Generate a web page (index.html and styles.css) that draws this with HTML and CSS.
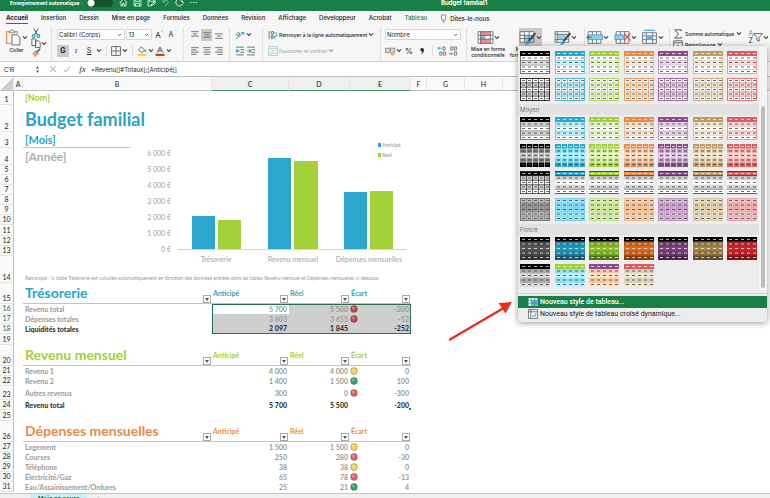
FILE: index.html
```
<!DOCTYPE html>
<html lang="fr">
  <head>
    <meta charset="utf-8">
    <title>Budget familial1</title>
    <link rel="stylesheet" href="styles.css">
  </head>
  <body>
    <svg class="sprite" aria-hidden="true">
      <symbol id="caret" viewBox="0 0 5 4"><path d="M.8 1l1.7 1.7L4.2 1" fill="none" stroke="#444" stroke-width="1"/></symbol>
      <symbol id="light" viewBox="0 0 8 8"><circle cx="4" cy="4" r="3.4" fill="currentColor" stroke="rgba(0,0,0,.35)" stroke-width=".7"/><circle cx="3.2" cy="3" r="1.2" fill="#fff" opacity=".35"/></symbol>

      <!-- table style previews -->
      <symbol id="dashes" viewBox="0 0 30 23">
        <path d="M2 2.5h28" stroke="#fff" stroke-dasharray="3 3" opacity=".7"/>
        <path d="M2 7h28M2 11.5h28M2 16h28M2 20.5h28" stroke="#444" stroke-dasharray="3 3" opacity=".8"/>
      </symbol>
      <symbol id="lines" viewBox="0 0 30 23">
        <rect width="30" height="23" fill="#fff"/>
        <path d="M0 11.5h30" stroke="var(--tint)" stroke-width="4" opacity=".5"/>
        <path d="M0 9.5h30M0 14h30M0 18.5h30" stroke="var(--mid)" stroke-width=".7"/>
        <rect x=".5" y=".5" width="29" height="22" fill="none" stroke="var(--mid)"/>
        <rect width="30" height="5" fill="var(--main)"/>
        <use href="#dashes"/>
      </symbol>
      <symbol id="grid" viewBox="0 0 30 23">
        <rect width="30" height="23" fill="#fff"/>
        <path d="M0 7h30M0 16h30" stroke="var(--tint)" stroke-width="4" opacity=".6"/>
        <path d="M0 4.8h30M0 9.2h30M0 13.8h30M0 18.2h30M6.5 0v23M12.5 0v23M18.5 0v23M24.5 0v23" stroke="var(--main)" stroke-width=".6"/>
        <rect x=".5" y=".5" width="29" height="22" fill="none" stroke="var(--main)" stroke-width=".8"/>
        <use href="#dashes"/>
        <path d="M2 2.5h28" stroke="#444" stroke-dasharray="3 3" opacity=".8"/>
      </symbol>
      <symbol id="bands" viewBox="0 0 30 23">
        <rect width="30" height="23" fill="#fff"/>
        <path d="M0 7h30M0 16h30" stroke="var(--tint)" stroke-width="4.5" opacity=".7"/>
        <path d="M0 9.3h30M0 13.8h30M0 18.3h30" stroke="var(--mid)" stroke-width=".6"/>
        <rect x=".5" y=".5" width="29" height="22" fill="none" stroke="var(--mid)"/>
        <rect width="30" height="5" fill="var(--main)"/>
        <use href="#dashes"/>
      </symbol>
      <symbol id="blocks" viewBox="0 0 30 23">
        <rect width="30" height="23" fill="var(--tint)"/>
        <path d="M0 7h30M0 16h30" stroke="var(--mid)" stroke-width="4.5"/>
        <rect width="30" height="5" fill="var(--main)"/>
        <rect y="18" width="30" height="5" fill="var(--main)"/>
        <path d="M6.5 0v23M12.5 0v23M18.5 0v23M24.5 0v23M0 4.8h30M0 9.2h30M0 13.8h30M0 18.2h30" stroke="#fff" stroke-width=".6"/>
        <use href="#dashes"/>
      </symbol>
      <symbol id="grey" viewBox="0 0 30 23">
        <rect width="30" height="23" fill="#fff"/>
        <path d="M0 7h30M0 16h30" stroke="#d4d4d4" stroke-width="4.5"/>
        <rect width="30" height="5" fill="var(--main)"/>
        <path d="M0 .5h30M0 4.7h30M0 22.5h30" stroke="#333" stroke-width=".8"/>
        <path d="M0 18.3h30" stroke="#777" stroke-width=".8"/>
        <use href="#dashes"/>
      </symbol>
      <symbol id="greygrid" viewBox="0 0 30 23">
        <use href="#grey"/>
        <path d="M.5 0v23M6.5 5v18M12.5 5v18M18.5 5v18M24.5 5v18M29.5 0v23M0 9.3h30M0 13.8h30" stroke="#222" stroke-width=".7"/>
      </symbol>
      <symbol id="tinted" viewBox="0 0 30 23">
        <rect width="30" height="23" fill="var(--tint)"/>
        <path d="M0 7h30M0 11.5h30" stroke="var(--mid)" stroke-width="4" opacity=".5"/>
        <path d="M0 4.8h30M0 9.2h30M0 13.8h30M0 18.2h30M6.5 0v23M12.5 0v23M18.5 0v23M24.5 0v23" stroke="var(--mid)" stroke-width=".6"/>
        <rect x=".5" y=".5" width="29" height="22" fill="none" stroke="var(--mid)"/>
        <use href="#dashes"/>
        <path d="M2 2.5h28" stroke="#444" stroke-dasharray="3 3" opacity=".8"/>
      </symbol>
      <symbol id="solid" viewBox="0 0 30 23">
        <rect width="30" height="23" fill="var(--deep)"/>
        <path d="M0 7h30M0 16h30" stroke="#000" stroke-width="4.5" opacity=".12"/>
        <path d="M0 20.7h30" stroke="#000" stroke-width="4.6" opacity=".4"/>
        <rect width="30" height="4.5" fill="#000"/>
        <path d="M2 2.5h28M2 7h28M2 11.5h28M2 16h28M2 20.5h28" stroke="#fff" stroke-dasharray="3 3" opacity=".7"/>
      </symbol>
      <symbol id="duo" viewBox="0 0 30 23">
        <rect width="30" height="23" fill="var(--light)"/>
        <path d="M0 7h30M0 16h30" stroke="var(--stripe)" stroke-width="4.5"/>
        <path d="M0 18.5h30" stroke="var(--stripe)"/>
        <rect width="30" height="5" fill="var(--main)"/>
        <use href="#dashes"/>
      </symbol>
    </svg>

    <div class="app">
      <header class="titlebar">
        <label class="autosave">Enregistrement automatique <input type="checkbox" class="toggle"></label>
        <nav class="quick">
          <button aria-label="Accueil"><svg viewBox="0 0 9 9"><path d="M1 4.5L4.5 1 8 4.5M2 4v4h1.800V5.500h1.400V8H7V4"/></svg></button>
          <button aria-label="Enregistrer"><svg viewBox="0 0 9 9"><path d="M1 1h6l1 1v6H1zM2.500 1v2.300h4V1M2.500 8V5.300h4V8"/></svg></button>
          <button aria-label="Enregistrer sous"><svg viewBox="0 0 9 9"><path d="M1 1h6l1 1v2M3.500 8H1V1M2.500 1v2.300h4V1M4 8l.5-2L8 3.500 8.500 5z"/></svg></button>
          <button class="dim" aria-label="Annuler"><svg viewBox="0 0 9 9"><path d="M2 1v3h3M2 4c2-3 6-2 5 1L4 8"/></svg></button>
          <button aria-label="Rétablir"><svg viewBox="0 0 9 9"><path d="M6 1.200A3.600 3.600 0 1 0 8 4M6 1v2.300h2.300"/></svg></button>
          <button aria-label="Plus"><svg viewBox="0 0 9 9"><path d="M1 4.500h1.400M3.800 4.500h1.400M6.600 4.500H8"/></svg></button>
        </nav>
        <span class="docname">Budget familial1</span>
      </header>

      <nav class="tabs">
        <a href="#" class="active">Accueil</a>
        <a href="#">Insertion</a>
        <a href="#">Dessin</a>
        <a href="#">Mise en page</a>
        <a href="#">Formules</a>
        <a href="#">Données</a>
        <a href="#">Révision</a>
        <a href="#">Affichage</a>
        <a href="#">Développeur</a>
        <a href="#">Acrobat</a>
        <a href="#" class="context">Tableau</a>
        <a href="#" class="tell"><svg viewBox="0 0 7 9"><path d="M2.300 6.300C2.300 5 1 4.600 1 3.100a2.500 2.500 0 0 1 5 0c0 1.500-1.300 1.900-1.300 3.200zM2.500 8h2" fill="none" stroke="#555" stroke-width=".7"/></svg>Dites-le-nous</a>
      </nav>

      <div class="ribbon">
        <div class="group clipboard">
          <button class="big">
            <span class="icon-row"><svg class="i16" viewBox="0 0 16 16"><path d="M5 2.500H1.500v11H6M9 2.500h2.500V5" fill="none" stroke="#e8a04c" stroke-width="1.300"/><path d="M4 3.500V2h1.500a1.200 1.200 0 0 1 2.400 0H9.500v1.500z" fill="#fff" stroke="#777" stroke-width=".8"/><path d="M6.500 5.500h5l2.500 2.500v7H6.500z" fill="#fff" stroke="#666" stroke-width=".9"/></svg><svg class="caret"><use href="#caret"/></svg></span>
            Coller
          </button>
          <div class="stack">
            <button aria-label="Couper"><svg class="i9" viewBox="0 0 9 9"><path d="M2.500.5l3.500 6M6.500.5L3 6.500" fill="none" stroke="#555" stroke-width=".9"/><circle cx="2.300" cy="7.200" r="1.200" fill="none" stroke="#2a9fd0"/><circle cx="6.700" cy="7.200" r="1.200" fill="none" stroke="#2a9fd0"/></svg></button>
            <button aria-label="Copier"><svg class="i9" viewBox="0 0 9 9"><path d="M.8.8h3.500v6H.8zM4 2.500h2.500L8.300 4v4.500H4z" fill="#fff" stroke="#555" stroke-width=".8"/></svg><svg class="caret"><use href="#caret"/></svg></button>
            <button aria-label="Reproduire la mise en forme"><svg class="i9" viewBox="0 0 9 9"><path d="M8.300.7L5.500 3.500" stroke="#555" stroke-width="1.400"/><path d="M3.500 2.500l3 3L4 8.500 1 5.500z" fill="#f0a45c"/><path d="M3.600 2.300l3.200 3.200" stroke="#555" stroke-width=".9"/></svg></button>
          </div>
        </div>

        <div class="group font">
          <div class="line">
            <select class="box font-name" aria-label="Police"><option>Calibri (Corps)</option></select>
            <select class="box font-size" aria-label="Taille"><option>13</option></select>
            <button class="letter">A<sup>^</sup></button>
            <button class="letter small">A<sup>ˇ</sup></button>
          </div>
          <div class="line">
            <button class="on"><b>G</b></button>
            <button class="sq"><i class="serif">I</i></button>
            <button class="sq"><u>S</u></button><svg class="caret"><use href="#caret"/></svg>
            <span class="sep"></span>
            <svg class="i9" viewBox="0 0 9 9"><path d="M.5.5h8v8h-8zM4.500.5v8M.5 4.500h8" fill="none" stroke="#666" stroke-width=".8"/></svg><svg class="caret"><use href="#caret"/></svg>
            <span class="sep"></span>
            <svg class="i9" viewBox="0 0 9 9"><path d="M3.800.8L7 3.800 4 6 1.500 3.500z" fill="#fff" stroke="#555" stroke-width=".8"/><path d="M7 3.500l1 1.800" stroke="#2a9fd0"/><path d="M.5 8h8" stroke="#f5d32c" stroke-width="1.800"/></svg><svg class="caret"><use href="#caret"/></svg>
            <svg class="i9" viewBox="0 0 9 9"><path d="M2 6l2.500-5L7 6M3 4.300h3" fill="none" stroke="#555" stroke-width=".9"/><path d="M.5 8h8" stroke="#e2231a" stroke-width="1.800"/></svg><svg class="caret"><use href="#caret"/></svg>
          </div>
        </div>

        <div class="group align">
          <div class="line">
            <button class="sq" aria-label="Haut"><svg class="i9" viewBox="0 0 9 9"><path d="M1 1.500h7M2.500 3.500h4M1 5.500h7"/></svg></button>
            <button class="on" aria-label="Milieu"><svg class="i9" viewBox="0 0 9 9"><path d="M1 2.500h7M2.500 4.500h4M1 6.500h7"/></svg></button>
            <button class="sq" aria-label="Bas"><svg class="i9" viewBox="0 0 9 9"><path d="M1 3.500h7M2.500 5.500h4M1 7.500h7"/></svg></button>
          </div>
          <div class="line">
            <button class="sq" aria-label="Gauche"><svg class="i9" viewBox="0 0 9 9"><path d="M1 1.500h7M1 3.500h5M1 5.500h7M1 7.500h5"/></svg></button>
            <button class="sq" aria-label="Centrer"><svg class="i9" viewBox="0 0 9 9"><path d="M1 1.500h7M2 3.500h5M1 5.500h7M2 7.500h5"/></svg></button>
            <button class="sq" aria-label="Droite"><svg class="i9" viewBox="0 0 9 9"><path d="M1 1.500h7M3 3.500h5M1 5.500h7M3 7.500h5"/></svg></button>
          </div>
        </div>

        <div class="group indent">
          <div class="line">
            <svg class="i9" viewBox="0 0 9 9"><path d="M1 8l7-6M8 2L5.500 2.300M8 2v2.500" fill="none" stroke="#2a9fd0" stroke-width=".9"/><path d="M1 4l2-2 1.500 1.500-2 2z" fill="none" stroke="#555" stroke-width=".8"/></svg><svg class="caret"><use href="#caret"/></svg>
          </div>
          <div class="line">
            <svg class="i9" viewBox="0 0 9 9"><path d="M1 1h7M1 8h7M5 3.300h3M5 5.700h3" stroke="#666" stroke-width=".8"/><path d="M4.500 4.500h-3M2.500 3L1 4.500 2.500 6" fill="none" stroke="#2a9fd0"/></svg>
            <svg class="i9" viewBox="0 0 9 9"><path d="M1 1h7M1 8h7M5 3.300h3M5 5.700h3" stroke="#666" stroke-width=".8"/><path d="M1 4.500h3M2.800 3l1.500 1.500L2.800 6" fill="none" stroke="#2a9fd0"/></svg>
          </div>
        </div>

        <div class="group wrap">
          <button class="line"><svg class="i9" viewBox="0 0 9 9"><path d="M1 1v7M3 1.500h2v2H3zM3 5h1.500v2.500H3z" fill="none" stroke="#666" stroke-width=".8"/><path d="M6 2.500h1.500c1.500 3-.5 4-2 4M6.800 5L5.300 6.500 6.800 8" fill="none" stroke="#2a9fd0" stroke-width=".8"/></svg>Renvoyer à la ligne automatiquement <svg class="caret"><use href="#caret"/></svg></button>
          <button class="line" disabled><svg class="i9" viewBox="0 0 9 9"><path d="M.5.5h8v8h-8zM.5 2.500h8M.5 6.500h8M3 4.500h3" fill="none" stroke="#9cc" stroke-width=".7"/></svg>Fusionner et centrer <svg class="caret"><use href="#caret"/></svg></button>
        </div>

        <div class="group number">
          <div class="line"><select class="box" aria-label="Format"><option>Nombre</option></select></div>
          <div class="line">
            <svg class="i9" viewBox="0 0 9 9"><path d="M.5 2h8v4h-8z" fill="#ddd" stroke="#777" stroke-width=".7"/><circle cx="4.500" cy="4" r="1" fill="#888"/><path d="M5 5h3.500v3.500H5z" fill="#f1b15f"/></svg><svg class="caret"><use href="#caret"/></svg>
            <button class="sq pct">%</button>
            <button class="sq" aria-label="Milliers"><svg class="i9" viewBox="0 0 9 9"><path d="M3 3.200a1.600 1.600 0 1 1 3.200.3C6.200 5.500 5 7 3.500 7.500c.8-1 1.200-1.700 1.200-2.600A1.600 1.600 0 0 1 3 3.200z" fill="#222"/></svg></button>
            <span class="sep"></span>
            <svg class="i9" viewBox="0 0 9 9"><path d="M4 2H.8M2 .8L.8 2 2 3.200" fill="none" stroke="#2a9fd0" stroke-width=".9"/><path d="M5.300.8h2v2.800h-2zM2.500 5.400h2v2.800h-2zM5.800 5.400h2v2.800h-2z" fill="none" stroke="#666" stroke-width=".7"/></svg>
            <svg class="i9" viewBox="0 0 9 9"><path d="M.8 7H4M2.800 5.800L4 7 2.800 8.200" fill="none" stroke="#2a9fd0" stroke-width=".9"/><path d="M2.500.8h2v2.800h-2zM5.800.8h2v2.800h-2zM5.800 5.400h2v2.800h-2z" fill="none" stroke="#666" stroke-width=".7"/></svg>
          </div>
        </div>

        <div class="group styles">
          <button class="big">
            <span class="icon-row"><svg class="i16" viewBox="0 0 16 16"><path d="M1 2.500h14v11H1z" fill="#fff"/><path d="M3 2.500h9v3.500H3zM3 9.500h9v4H3z" fill="#f28b82"/><path d="M3 6h5v3.500H3z" fill="#7db8dc"/><path d="M1 2.500h14v11H1zM3.500 2v12M12.500 2v12M1 6h14M1 9.500h14" fill="none" stroke="#555" stroke-width=".7"/></svg><svg class="caret"><use href="#caret"/></svg></span>
            Mise en forme<br>conditionnelle
          </button>
          <button class="big">
            <span class="icon-row pressed"><svg class="i16" viewBox="0 0 16 16"><path d="M1 2.500h13v10H1z" fill="#fff"/><path d="M5 6h9v6.500H5z" fill="#8fd0ee"/><path d="M1 2.500h13v10H1zM5 2.500v10M9.500 2.500v10M1 6h13M1 9h13" fill="none" stroke="#555" stroke-width=".7"/><path d="M15.500 4L9 11.500" stroke="#444" stroke-width="1.800"/><path d="M8.500 10.500l2 2c-1.500 2.500-3.500 2.500-5 2 2-1 1.500-3 3-4z" fill="#2a9fd0"/></svg><svg class="caret"><use href="#caret"/></svg></span>
            Mettre sous<br>forme de tableau
          </button>
          <button class="big">
            <span class="icon-row"><svg class="i16" viewBox="0 0 16 16"><path d="M1 2.500h13v10H1z" fill="#fff"/><path d="M3 5h9v5H3z" fill="#8fd0ee"/><path d="M1 2.500h13v10H1zM3 2.500v10M1 5h13M1 10h13" fill="none" stroke="#555" stroke-width=".7"/><path d="M15.500 4L9 11.500" stroke="#444" stroke-width="1.800"/><path d="M8.500 10.500l2 2c-1.500 2.500-3.500 2.500-5 2 2-1 1.500-3 3-4z" fill="#2a9fd0"/></svg><svg class="caret"><use href="#caret"/></svg></span>
            Styles<br>de cellules
          </button>
        </div>

        <div class="group cells">
          <button class="big"><span class="icon-row"><svg class="i16" viewBox="0 0 16 16"><path d="M2 2.500h12v11H2zM6 2.500v11M10 2.500v11" fill="#fff" stroke="#666" stroke-width=".8"/><path d="M3.500 5.500h12v4.500h-12z" fill="#8fd0ee" stroke="#3b93bd" stroke-width=".7"/><path d="M6 7.800H.8M3 5.500L.8 7.800 3 10" fill="none" stroke="#2a7fa8"/></svg><svg class="caret"><use href="#caret"/></svg></span>Insérer</button>
          <button class="big"><span class="icon-row"><svg class="i16" viewBox="0 0 16 16"><path d="M2 2.500h12v11H2zM6 2.500v11M10 2.500v11" fill="#fff" stroke="#666" stroke-width=".8"/><path d="M.8 5.500h8v4.500h-8z" fill="#8fd0ee" stroke="#3b93bd" stroke-width=".7"/><path d="M9.500 4l6 7M15.500 4l-6 7" stroke="#e05252" stroke-width="1.200"/></svg><svg class="caret"><use href="#caret"/></svg></span>Supprimer</button>
          <button class="big"><span class="icon-row"><svg class="i16" viewBox="0 0 16 16"><path d="M1.500 3.500h13v10h-13zM5 3.500v10M11 3.500v10M1.500 6.500h13M1.500 10h13" fill="#fff" stroke="#666" stroke-width=".8"/><path d="M5 6.500h6V10H5z" fill="#5bb5e0"/><path d="M3 1.200h10" stroke="#2a9fd0"/></svg><svg class="caret"><use href="#caret"/></svg></span>Format</button>
        </div>

        <div class="group edit">
          <div class="edit-lines">
            <button><svg class="i9" viewBox="0 0 9 9"><path d="M7.500 2V.8h-6L5 4.500 1.500 8.200h6V7" fill="none" stroke="#555" stroke-width=".9"/></svg>Somme automatique<svg class="caret"><use href="#caret"/></svg></button>
            <button><svg class="i9" viewBox="0 0 9 9"><path d="M.7.7h7.600v7.600H.7zM.7 2.500h7.600" fill="#fff" stroke="#555" stroke-width=".8"/><path d="M4.500 3.500V7M3 5.500L4.500 7 6 5.500" fill="none" stroke="#2a9fd0"/></svg>Remplissage<svg class="caret"><use href="#caret"/></svg></button>
          </div>
          <button class="icon-row" aria-label="Trier et filtrer"><span class="az"><span>A</span><span>Z</span></span><svg class="i9" viewBox="0 0 9 9"><path d="M.5 1.500h8L5.500 4.800v3.500l-2-1V4.800z" fill="#fff" stroke="#555" stroke-width=".8"/></svg><svg class="caret"><use href="#caret"/></svg></button>
        </div>
      </div>

      <div class="formula-bar">
        <input class="cell-ref" value="C16" aria-label="Zone Nom">
        <svg class="spin" viewBox="0 0 5 9"><path d="M1 3.500L2.500 1 4 3.500zM1 5.500L2.500 8 4 5.500z" fill="#555"/></svg>
        <button aria-label="Annuler la saisie"><svg class="i9" viewBox="0 0 9 9"><path d="M2 2l5 5M7 2L2 7" stroke="#bbb"/></svg></button>
        <button aria-label="Valider"><svg class="i9" viewBox="0 0 9 9"><path d="M1.500 5L3.500 7 7.500 2" fill="none" stroke="#bbb"/></svg></button>
        <i class="serif fx">fx</i>
        <input class="formula" value="=Revenu[[#Totaux];[Anticipé]]" aria-label="Barre de formule">
      </div>

      <main class="sheet">
        <table>
          <colgroup><col class="c-row"><col class="c-a"><col class="c-b"><col class="c-c"><col class="c-d"><col class="c-d"><col class="c-f"><col class="c-g"><col class="c-g"><col></colgroup>
          <thead>
            <tr><th class="corner"></th><th>A</th><th>B</th><th class="sel">C</th><th class="sel">D</th><th class="sel">E</th><th>F</th><th>G</th><th>H</th><th></th></tr>
          </thead>
          <tbody>
            <tr class="r14"><th>1</th><td></td><td class="name">[Nom]</td></tr>
            <tr class="r27"><th>2</th><td></td><td class="title" colspan="2">Budget familial</td></tr>
            <tr class="r16"><th>3</th><td></td><td class="month"><span>[Mois]</span></td></tr>
            <tr class="r17"><th>4</th><td></td><td class="year">[Année]</td></tr>
            <tr><th>5</th></tr>
            <tr><th>6</th></tr>
            <tr><th>7</th></tr>
            <tr><th>8</th></tr>
            <tr><th>9</th></tr>
            <tr><th>10</th></tr>
            <tr class="r11"><th>11</th></tr>
            <tr><th>12</th></tr>
            <tr><th>13</th></tr>
            <tr class="r27"><th>14</th><td></td><td class="note" colspan="5">Remarque : la table Trésorerie est calculée automatiquement en fonction des données entrées dans les tables Revenu mensuel et Dépenses mensuelles ci-dessous</td></tr>

            <tr class="head blue"><th>15</th><td></td><td><div class="h big-h">Trésorerie<button class="filter" aria-label="Filtrer"></button></div></td><td><div class="h">Anticipé<button class="filter" aria-label="Filtrer"></button></div></td><td><div class="h">Réel<button class="filter" aria-label="Filtrer"></button></div></td><td><div class="h">Écart<button class="filter" aria-label="Filtrer"></button></div></td></tr>
            <tr class="picked first"><th>16</th><td></td><td>Revenu total</td><td class="n s active-cell">5 700</td><td class="n s">5 500</td><td class="n s"><svg class="dot red"><use href="#light"/></svg>-200</td></tr>
            <tr class="picked"><th>17</th><td></td><td>Dépenses totales</td><td class="n s">3 603</td><td class="n s">3 655</td><td class="n s"><svg class="dot red"><use href="#light"/></svg>-52</td></tr>
            <tr class="picked last total"><th>18</th><td></td><td>Liquidités totales</td><td class="n s">2 097</td><td class="n s">1 845</td><td class="n s">-252</td></tr>
            <tr class="r11"><th>19</th></tr>

            <tr class="head green"><th>20</th><td></td><td><div class="h big-h">Revenu mensuel<button class="filter" aria-label="Filtrer"></button></div></td><td><div class="h">Anticipé<button class="filter" aria-label="Filtrer"></button></div></td><td><div class="h">Réel<button class="filter" aria-label="Filtrer"></button></div></td><td><div class="h">Écart<button class="filter" aria-label="Filtrer"></button></div></td></tr>
            <tr><th>21</th><td></td><td>Revenu 1</td><td class="n">4 000</td><td class="n">4 000</td><td class="n"><svg class="dot yellow"><use href="#light"/></svg>0</td></tr>
            <tr><th>22</th><td></td><td>Revenu 2</td><td class="n">1 400</td><td class="n">1 500</td><td class="n"><svg class="dot ok"><use href="#light"/></svg>100</td></tr>
            <tr class="r14"><th>23</th><td></td><td>Autres revenus</td><td class="n">300</td><td class="n">0</td><td class="n"><svg class="dot red"><use href="#light"/></svg>-300</td></tr>
            <tr class="total"><th>24</th><td></td><td>Revenu total</td><td class="n">5 700</td><td class="n">5 500</td><td class="n end">-200</td></tr>
            <tr class="r11"><th>25</th></tr>

            <tr class="head orange"><th>26</th><td></td><td><div class="h big-h">Dépenses mensuelles<button class="filter" aria-label="Filtrer"></button></div></td><td><div class="h">Anticipé<button class="filter" aria-label="Filtrer"></button></div></td><td><div class="h">Réel<button class="filter" aria-label="Filtrer"></button></div></td><td><div class="h">Écart<button class="filter" aria-label="Filtrer"></button></div></td></tr>
            <tr><th>27</th><td></td><td>Logement</td><td class="n">1 500</td><td class="n">1 500</td><td class="n"><svg class="dot yellow"><use href="#light"/></svg>0</td></tr>
            <tr><th>28</th><td></td><td>Courses</td><td class="n">250</td><td class="n">280</td><td class="n"><svg class="dot red"><use href="#light"/></svg>-30</td></tr>
            <tr><th>29</th><td></td><td>Téléphone</td><td class="n">38</td><td class="n">38</td><td class="n"><svg class="dot yellow"><use href="#light"/></svg>0</td></tr>
            <tr><th>30</th><td></td><td>Électricité/Gaz</td><td class="n">65</td><td class="n">78</td><td class="n"><svg class="dot red"><use href="#light"/></svg>-13</td></tr>
            <tr><th>31</th><td></td><td>Eau/Assainissement/Ordures</td><td class="n">25</td><td class="n">21</td><td class="n"><svg class="dot ok"><use href="#light"/></svg>4</td></tr>
          </tbody>
        </table>

        <svg class="chart" viewBox="0 0 280 130">
          <g text-anchor="end">
            <text x="31" y="18">6 000 €</text>
            <text x="31" y="34">5 000 €</text>
            <text x="31" y="50">4 000 €</text>
            <text x="31" y="66">3 000 €</text>
            <text x="31" y="82">2 000 €</text>
            <text x="31" y="98">1 000 €</text>
            <text x="31" y="114">0 €</text>
          </g>
          <path d="M38 111.500h228" stroke="#d5d5d5"/>
          <g fill="#2ba7cf">
            <rect x="52" y="78" width="23" height="33"/>
            <rect x="128" y="20" width="23" height="91"/>
            <rect x="204" y="54" width="23" height="57"/>
            <rect x="238" y="5" width="3" height="4"/>
          </g>
          <g fill="#a2d13a">
            <rect x="78" y="82" width="23" height="29"/>
            <rect x="154" y="23" width="24" height="88"/>
            <rect x="230" y="53" width="23" height="58"/>
            <rect x="238" y="15" width="3" height="4"/>
          </g>
          <g text-anchor="middle">
            <text x="76" y="124">Trésorerie</text>
            <text x="153" y="124">Revenu mensuel</text>
            <text x="229" y="124">Dépenses mensuelles</text>
          </g>
          <text class="legend" x="242" y="9">Anticipé</text>
          <text class="legend" x="242" y="19">Réel</text>
        </svg>

        <svg class="arrow" viewBox="0 0 66 42"><path d="M2 38.500L54 8" stroke="#e8301c" stroke-width="2.500" stroke-linecap="round"/><path d="M64 1L57.500 12.500 50.500 2z" fill="#e8301c"/></svg>
      </main>

      <footer class="sheet-tabs">
        <a href="#">Mois en cours</a>
        <button aria-label="Ajouter une feuille">+</button>
      </footer>

      <div class="style-menu">
        <div class="scroller">
          <div class="gallery">
            <div class="thumbs" data-rows="lines grid"></div>
            <h2>Moyen</h2>
            <div class="thumbs" data-rows="bands blocks grey tinted"></div>
            <h2>Foncé</h2>
            <div class="thumbs" data-rows="solid duo"></div>
          </div>
          <div class="track"><div class="knob"></div></div>
        </div>
        <div class="actions">
          <button class="current"><svg class="i9" viewBox="0 0 9 9"><path d="M.5 1h8v7h-8z" fill="#fff"/><path d="M3 3h5.500v5H3z" fill="#5bb5e0"/><path d="M3 1v7M6 1v7M.5 3h8M.5 5.500h8" stroke="#3b78a8" stroke-width=".6"/></svg>Nouveau style de tableau...</button>
          <button><svg class="i9" viewBox="0 0 9 9"><path d="M.5.5h8v8h-8zM.5 2.500h8M2.500.5v8" fill="#fff" stroke="#555" stroke-width=".7"/><path d="M4 6.500h2.500V4M3.800 6.500l1-1M6.500 4l1 1" fill="none" stroke="#2a9fd0" stroke-width=".8"/></svg>Nouveau style de tableau croisé dynamique...</button>
        </div>
      </div>
    </div>
    <script src="script.js"></script>
  </body>
</html>
```
FILE: styles.css
```
* {
  box-sizing: border-box;
}
body {
  margin: 0;
  overflow: hidden;
  font-family: Inter, "Liberation Sans", sans-serif;
  font-size: 6px;
  color: #222;
  background: #fff;
}
button {
  font: inherit;
  color: inherit;
  background: none;
  border: 0;
  padding: 0;
  white-space: nowrap;
}
input,
select {
  font: inherit;
  color: inherit;
}
a {
  color: inherit;
  text-decoration: none;
}
.sprite {
  position: absolute;
  width: 0;
  height: 0;
}
.app {
  position: relative;
  display: flex;
  flex-direction: column;
  height: 100vh;
}
.serif {
  font-family: "Liberation Serif", serif;
}
.i9 {
  width: 10px;
  height: 10px;
  flex: none;
}
.i16 {
  width: 17px;
  height: 17px;
  flex: none;
}
.caret {
  width: 6px;
  height: 5px;
  flex: none;
}

/* title bar */
.titlebar {
  display: flex;
  align-items: center;
  flex: none;
  height: 11px;
  padding: 0 10px 6px;
  background: #1a7f46;
  color: #fff;
  font-weight: 600;
  overflow: hidden;
}
.autosave {
  display: flex;
  align-items: center;
  gap: 7px;
  width: 109px;
  font-size: 5px;
  font-weight: 700;
  white-space: nowrap;
}
.toggle {
  appearance: none;
  margin: 0;
  width: 26px;
  height: 8px;
  flex: none;
  border-radius: 4px;
  background: radial-gradient(circle at 4px 4px, #fff 3px, #14532f 4px);
}
.quick {
  display: flex;
  gap: 5px;
  flex: none;
  width: 322px;
}
.quick svg {
  display: block;
  width: 9px;
  height: 9px;
  fill: none;
  stroke: #fff;
  stroke-width: 0.8;
}
.dim {
  opacity: 0.5;
}
.docname {
  font-weight: 700;
  white-space: nowrap;
}

/* tabs */
.tabs {
  display: flex;
  flex: none;
  gap: 13px;
  height: 16px;
  padding: 2px 6px 0;
  background: #f6f6f6;
  font-weight: 500;
  line-height: 10px;
}
.tabs a {
  height: 11px;
  white-space: nowrap;
}
.tabs .active {
  font-weight: 700;
  border-bottom: 1px solid #1a7f46;
}
.tabs .context {
  color: #1a7f46;
}
.tell {
  display: flex;
  align-items: center;
  gap: 3px;
}
.tell svg {
  width: 7px;
  height: 9px;
}

/* ribbon */
.ribbon {
  display: flex;
  flex: none;
  height: 35px;
  background: #f6f6f6;
  border-bottom: 1px solid #d2d2d2;
}
.group {
  display: flex;
  flex: none;
  flex-direction: column;
  gap: 3px;
  padding: 1px 5px 3px;
}
.group + .group {
  border-left: 1px solid #e0e0e0;
}
.line {
  display: flex;
  align-items: center;
  height: 13px;
  gap: 1px;
}
.line:disabled {
  color: #aaa;
}
.line:disabled .caret {
  opacity: 0.5;
}
.sep {
  width: 1px;
  height: 11px;
  margin: 0 3px;
  background: #ddd;
}
.box {
  appearance: none;
  height: 11px;
  padding: 0 8px 0 1px;
  border: 1px solid #d6d6d6;
  border-radius: 1px;
  background: #fff url("data:image/svg+xml,%3Csvg xmlns='http://www.w3.org/2000/svg' width='5' height='4'%3E%3Cpath d='M1 1l1.500 1.500L4 1' fill='none' stroke='%23444' stroke-width='.8'/%3E%3C/svg%3E") no-repeat right 2px center;
}
.on,
.sq {
  display: flex;
  align-items: center;
  justify-content: center;
  width: 12px;
  height: 12px;
  font-size: 7px;
}
.on {
  background: #c9c9c9;
}
.clipboard {
  flex-direction: row;
  width: 51px;
}
.big {
  display: flex;
  flex-direction: column;
  align-items: center;
  text-align: center;
  font-size: 5px;
  font-weight: 500;
  line-height: 6px;
}
.icon-row {
  display: flex;
  align-items: center;
  height: 18px;
}
.clipboard .big {
  gap: 1px;
}
.stack {
  display: flex;
  flex-direction: column;
}
.stack button {
  display: flex;
  align-items: center;
  height: 10px;
}
.font {
  width: 132px;
}
.font-name {
  width: 69px;
}
.font-size {
  width: 26px;
}
.letter {
  width: 12px;
  font-size: 8px;
  line-height: 10px;
}
.letter.small {
  font-size: 7px;
}
.letter sup {
  font-size: 5px;
  line-height: 1px;
  color: #2a9fd0;
}
.align {
  width: 46px;
}
.align svg {
  fill: none;
  stroke: #777;
  stroke-width: 0.9;
}
.indent {
  width: 33px;
}
.wrap {
  width: 118px;
}
.wrap .line {
  font-size: 5px;
  font-weight: 500;
}
.number {
  width: 86px;
  padding-left: 4px;
}
.number .box {
  width: 76px;
}
.pct {
  font-size: 8px;
}
.styles {
  flex-direction: row;
  gap: 0;
  width: 118px;
  padding: 1px 0 3px;
}
.styles .big {
  width: 42px;
}
.styles .big:last-child {
  width: 28px;
}
.pressed {
  background: #c9c9c9;
}
.cells {
  flex-direction: row;
  width: 85px;
  padding-left: 1px;
}
.cells .big {
  width: 25px;
}
.edit {
  flex: 1;
  flex-direction: row;
  padding: 1px 1px 3px 3px;
}
.edit-lines button {
  display: flex;
  align-items: center;
  gap: 2px;
  height: 11px;
  font-size: 5px;
  font-weight: 500;
}
.edit .icon-row {
  margin-left: auto;
}
.az {
  display: flex;
  flex-direction: column;
  font-size: 7px;
  line-height: 7px;
}
.az span:first-child {
  color: #2a9fd0;
}

/* formula bar */
.formula-bar {
  display: flex;
  align-items: center;
  flex: none;
  height: 15px;
  border-bottom: 1px solid #bdbdbd;
}
.formula-bar input {
  border: 0;
  padding: 0;
  background: none;
  outline: 0;
}
.formula-bar button {
  width: 14px;
}
.cell-ref {
  width: 31px;
  margin-left: 4px;
}
.spin {
  width: 5px;
  height: 9px;
  margin-right: 6px;
}
.fx {
  width: 17px;
  font-size: 9px;
  text-align: center;
}
.formula {
  flex: 1;
}

/* sheet */
.sheet {
  position: relative;
  flex: 1;
  min-height: 0;
  overflow: hidden;
  font-family: Lato, "Liberation Sans", sans-serif;
  font-size: 7px;
}
.sheet table {
  width: 100%;
  table-layout: fixed;
  border-collapse: separate;
  border-spacing: 0;
}
.c-row {
  width: 14px;
}
.c-a {
  width: 9px;
}
.c-b {
  width: 189px;
}
.c-c {
  width: 77px;
}
.c-d {
  width: 61px;
}
.c-f {
  width: 16px;
}
.c-g {
  width: 38px;
}
.sheet thead th {
  height: 14px;
  padding: 0;
  font-weight: 400;
  border-right: 1px solid #e6e6e6;
  border-bottom: 1px solid #bdbdbd;
  background: #fafafa;
}
.sheet thead .sel {
  color: #1f6b4a;
  font-weight: 700;
  background: #efefef;
  border-bottom-color: #4b8a72;
}
.sheet thead .corner {
  background: linear-gradient(135deg, #fafafa 50%, #cfcfcf 50%);
}
.sheet tbody tr {
  height: 10px;
}
.sheet tbody th {
  padding: 0;
  font-weight: 400;
  line-height: 9px;
  vertical-align: bottom;
  background: #fafafa;
  border-right: 1px solid #bdbdbd;
  border-bottom: 1px solid #e6e6e6;
}
.sheet td {
  padding: 0 2px;
  color: #999;
  font-weight: 700;
  line-height: 10px;
  vertical-align: middle;
  white-space: nowrap;
}
.sheet .r11 {
  height: 11px;
}
.sheet .r14 {
  height: 14px;
}
.sheet .r16 {
  height: 16px;
}
.sheet .r17 {
  height: 17px;
}
.sheet .r27 {
  height: 27px;
}
.sheet .head {
  height: 21px;
}
.sheet .name {
  color: #a2d13a;
  font-size: 9px;
}
.sheet .title {
  color: #2ba3c9;
  font-size: 18px;
  line-height: 26px;
  vertical-align: bottom;
}
.sheet .month {
  padding: 0;
  color: #2ba3c9;
  font-size: 11px;
  line-height: 15px;
}
.month span {
  display: block;
  width: 107px;
  padding-left: 2px;
  border-bottom: 1px solid #c4c4c4;
}
.sheet .year {
  font-size: 12px;
  line-height: 17px;
  color: #b0b0b0;
}
.sheet .note {
  font-size: 5px;
  font-weight: 400;
  vertical-align: bottom;
}
.head td:nth-child(n + 3) {
  padding: 0 1px;
  border-bottom: 1px solid #c4c4c4;
}
.sheet .blue td {
  color: #2ba3c9;
}
.sheet .green td {
  color: #a2d13a;
}
.sheet .orange td {
  color: #e98b46;
}
.h {
  display: flex;
  justify-content: space-between;
  height: 20px;
  line-height: 20px;
}
.big-h {
  padding-left: 1px;
  font-size: 14px;
}
.filter {
  display: flex;
  align-items: center;
  justify-content: center;
  align-self: flex-end;
  width: 8px;
  height: 8px;
  border: 1px solid #aaa;
  background: #fff;
}
.filter::after {
  content: "";
  width: 0;
  border: 2px solid transparent;
  border-top: 3px solid #555;
  border-bottom: 0;
}
.sheet .n {
  text-align: right;
}
.dot {
  float: left;
  width: 8px;
  height: 8px;
  margin: 1px 0 1px -2px;
}
.first .dot {
  margin: 0 0 1px -2px;
}
.red {
  color: #e0606a;
}
.yellow {
  color: #fbd25a;
}
.ok {
  color: #3aa36a;
}
.sheet .total td {
  color: #333;
  font-weight: 900;
}
.picked th {
  color: #1f6b4a;
  border-right-color: #1f6b4a;
}
.picked .s {
  background: #cfcfcf;
}
.picked .active-cell {
  background: #fff;
}
.picked .red {
  color: #c04a50;
}
.picked .s:nth-child(4) {
  box-shadow: inset 1px 0 #2c6e50;
}
.picked .s:nth-child(6) {
  box-shadow: inset -1px 0 #2c6e50;
}
.first .s {
  border-top: 1px solid #2c6e50;
  line-height: 9px;
}
.last .s {
  border-bottom: 1px solid #2c6e50;
  line-height: 9px;
}
.end {
  background: linear-gradient(#2b6f9c, #2b6f9c) no-repeat right bottom / 2px 2px;
}
.chart {
  position: absolute;
  left: 140px;
  top: 61px;
  width: 280px;
  height: 130px;
  fill: #aaa;
  font-size: 7px;
  font-weight: 500;
}
.chart .legend {
  font-size: 5px;
  font-weight: 700;
}
.arrow {
  position: absolute;
  left: 448px;
  top: 224px;
  width: 66px;
  height: 42px;
}

/* sheet tabs */
.sheet-tabs {
  display: flex;
  flex: none;
  gap: 9px;
  height: 5px;
  padding-left: 30px;
  border-top: 1px solid #c4c4c4;
  background: #f0f0f0;
  overflow: hidden;
  font-weight: 700;
  line-height: 10px;
}
.sheet-tabs a {
  padding: 0 8px;
  color: #1f6b4a;
  background: #c9eef7;
}

/* table style menu */
.style-menu {
  position: absolute;
  top: 46px;
  right: 3px;
  width: 249px;
  padding-bottom: 2px;
  background: #ececec;
  border-radius: 0 0 3px 3px;
  box-shadow: 0 1px 6px rgba(0, 0, 0, 0.4);
}
.scroller {
  display: flex;
  height: 244px;
}
.gallery {
  flex: 1;
}
.gallery h2 {
  margin: 0;
  height: 11px;
  padding-left: 2px;
  background: #e2e2e2;
  color: #777;
  font-size: 6px;
  font-weight: 400;
  line-height: 11px;
}
.thumbs {
  display: grid;
  grid-template-columns: repeat(7, 30px);
  justify-content: space-between;
  row-gap: 4px;
  padding: 2px 2px 3px;
}
.thumbs:first-child {
  padding-top: 5px;
}
.thumbs svg {
  display: block;
  width: 30px;
  height: 23px;
}
.track {
  width: 8px;
  padding: 60px 2px 0;
  background: #f4f4f4;
}
.knob {
  height: 182px;
  border-radius: 2px;
  background: #bdbdbd;
}
.actions {
  margin-top: 3px;
  padding-top: 2px;
  border-top: 1px solid #d0d0d0;
  font-family: Roboto, sans-serif;
}
.actions button {
  display: flex;
  align-items: center;
  gap: 2px;
  width: 100%;
  height: 12px;
  padding-left: 10px;
  font-size: 7px;
}
.actions .current {
  background: #1a7f46;
  color: #fff;
  font-weight: 500;
}
.t-black {
  --main: #000;
  --mid: #777;
  --tint: #bdbdbd;
  --deep: #555;
  --light: #d8d8d8;
  --stripe: #aaa;
}
.t-blue {
  --main: #2ba7cb;
  --mid: #6fd0ea;
  --tint: #a5e6f5;
  --deep: #2596b8;
}
.t-lime {
  --main: #a0d138;
  --mid: #c4e38a;
  --tint: #dcefb8;
  --deep: #8cbc2c;
}
.t-orange {
  --main: #e98b46;
  --mid: #f2b888;
  --tint: #f8d8b8;
  --deep: #dd6a1c;
}
.t-purple {
  --main: #8d4b8c;
  --mid: #c196c0;
  --tint: #dcbcdc;
  --deep: #7c4279;
}
.t-tan {
  --main: #c09b63;
  --mid: #d8c5a0;
  --tint: #e9dfc8;
  --deep: #a2824c;
}
.t-red {
  --main: #d95f62;
  --mid: #ea9fa0;
  --tint: #f4c6c6;
  --deep: #c9282c;
}
.t-duo-blue {
  --main: #a0d138;
  --light: #c5f0fa;
  --stripe: #8fe0f2;
}
.t-duo-orange {
  --main: #8d4b8c;
  --light: #fce5cd;
  --stripe: #f6c9a0;
}
.t-duo-tan {
  --main: #d95f62;
  --light: #efe8d8;
  --stripe: #dcd2ba;
}
```
FILE: script.js
```
const colors = ["black", "blue", "lime", "orange", "purple", "tan", "red"];
const duoColors = ["black", "duo-blue", "duo-orange", "duo-tan"];

document.querySelectorAll(".thumbs").forEach((box) => {
  box.dataset.rows.split(" ").forEach((style) => {
    const list = style === "duo" ? duoColors : colors;
    list.forEach((color) => {
      const shape = style === "grey" && color === "black" ? "greygrid" : style;
      const button = document.createElement("button");
      button.className = "t-" + color;
      button.setAttribute("aria-label", style + " " + color);
      button.innerHTML = `<svg viewBox="0 0 30 23"><use href="#${shape}"/></svg>`;
      box.appendChild(button);
    });
  });
});
```
